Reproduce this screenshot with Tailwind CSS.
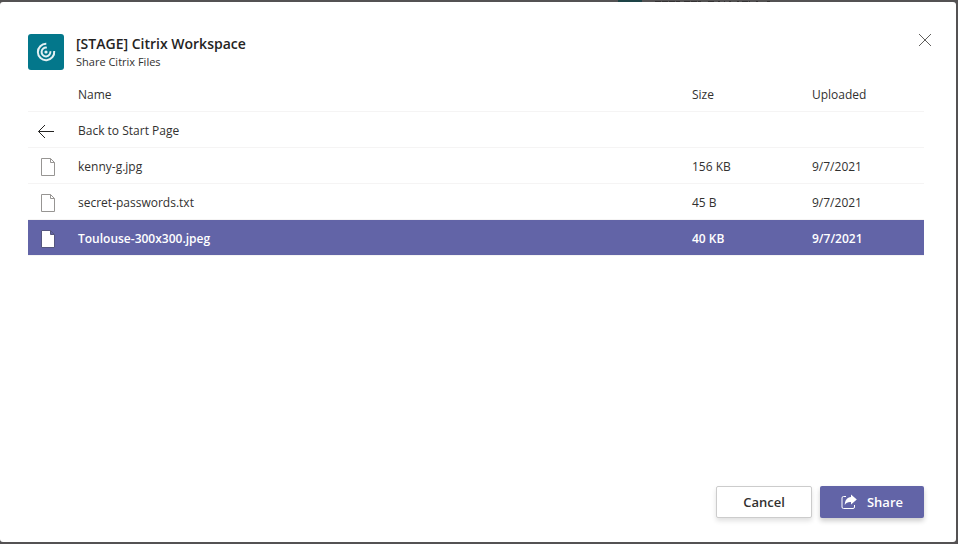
<!DOCTYPE html>
<html lang="en">
<head>
<meta charset="utf-8">
<meta name="viewport" content="width=device-width, initial-scale=1">
<title>Share Citrix Files</title>
<script src="https://cdn.jsdelivr.net/npm/@tailwindcss/browser@4"></script>
</head>
<body class="flex h-screen flex-col overflow-hidden bg-[#545253] pb-0.5 pr-0.5 font-['Segoe_UI','Open_Sans','Noto_Sans',sans-serif] text-xs text-[#323130]">
  <!-- Sliver of the dimmed page above the dialog -->
  <div class="flex h-0.5 shrink-0 justify-center overflow-hidden pl-[436px]" aria-hidden="true">
    <span class="h-0.5 w-6 bg-[#1d4346]"></span>
    <svg class="ml-3 h-0.5 w-30" viewBox="0 0 120 2" stroke="#333132"><path d="M1 1.500H26M30 1.500H47M54 1.500H60M64 1.500H66M70 1.500H71M75 1.500H77M83 1.500H85M88 1.500H96M102 1.500H104M113 1.500H116" stroke-dasharray="6 1"/></svg>
  </div>
  <main role="dialog" aria-labelledby="dialog-title" class="flex min-h-0 flex-1 flex-col rounded-[3px] bg-white pb-6 pl-7 pr-8 pt-8">
    <header class="flex items-start">
      <svg class="size-9 shrink-0" viewBox="0 0 36 36" fill="none" aria-hidden="true">
        <rect width="36" height="36" rx="3" fill="#03778b"/>
        <g stroke="#e4f1f3" stroke-width="2">
          <path d="M18.300 9.800A8.200 8.200 0 1 0 26.200 17"/>
          <path d="M18.800 13.700A4.400 4.400 0 1 0 22.300 17.200"/>
        </g>
        <circle cx="18" cy="18" r="1.600" fill="#e4f1f3"/>
      </svg>
      <div class="ml-3 flex-1">
        <h1 id="dialog-title" class="text-sm font-semibold leading-5 text-[#252423]">[STAGE] Citrix Workspace</h1>
        <p class="text-[11px] leading-4">Share Citrix Files</p>
      </div>
      <button type="button" aria-label="Close" class="-mr-[9px] -mt-1 flex h-5 w-4 items-center justify-center">
        <svg class="size-4" viewBox="0 0 16 16" fill="none" stroke="#605e5c" aria-hidden="true"><path d="M2 2l12 12M14 2L2 14"/></svg>
      </button>
    </header>
    <table class="mt-1.5 w-full table-fixed border-separate border-spacing-0 text-left text-xs">
      <colgroup><col class="w-[50px]"><col><col class="w-[120px]"><col class="w-28"></colgroup>
      <thead>
        <tr class="h-9 *:border-b *:border-[#f5f4f4] *:p-0 *:pt-0.5 *:font-normal">
          <th aria-label="Type"></th><th scope="col">Name</th><th scope="col">Size</th><th scope="col">Uploaded</th>
        </tr>
      </thead>
      <tbody>
        <tr class="h-9 *:border-b *:border-[#f5f4f4] *:p-0 *:pt-0.5">
          <td><svg class="-mt-0.5 ml-2.5 size-5" viewBox="0 0 20 20" fill="none" stroke="#252423" aria-hidden="true"><path d="M16 11.500H.5M7 5l-6.500 6.500L7 18"/></svg></td>
          <td><a href="#">Back to Start Page</a></td><td></td><td></td>
        </tr>
        <tr class="h-9 *:border-b *:border-[#f5f4f4] *:p-0 *:pt-0.5">
          <td><svg class="-mt-0.5 ml-2.5 size-5" viewBox="0 0 20 20" fill="#fff" stroke="#979593" aria-hidden="true"><path d="M3.500 2.500h9l4 4v13h-13zM12.500 2.500v4h4"/></svg></td>
          <td>kenny-g.jpg</td><td>156 KB</td><td>9/7/2021</td>
        </tr>
        <tr class="h-9 *:border-b *:border-[#f5f4f4] *:p-0 *:pt-0.5">
          <td><svg class="-mt-0.5 ml-2.5 size-5" viewBox="0 0 20 20" fill="#fff" stroke="#979593" aria-hidden="true"><path d="M3.500 2.500h9l4 4v13h-13zM12.500 2.500v4h4"/></svg></td>
          <td>secret-passwords.txt</td><td>45 B</td><td>9/7/2021</td>
        </tr>
        <tr class="h-9 bg-[#6264a7] font-semibold text-white *:border-b *:border-[#f5f4f4] *:p-0 *:pt-0.5" aria-selected="true">
          <td><svg class="-mt-0.5 ml-2.5 size-5" viewBox="0 0 20 20" fill="#fff" stroke="#55567f" aria-hidden="true"><path d="M3.500 2.500h9l4 4v13h-13zM12.500 2.500v4h4"/></svg></td>
          <td>Toulouse-300x300.jpeg</td><td>40 KB</td><td>9/7/2021</td>
        </tr>
      </tbody>
    </table>
    <footer class="mt-auto flex justify-end gap-2 text-[13px] font-semibold">
      <button type="button" class="h-8 w-24 rounded-xs border border-[#cccccc] bg-white pt-0.5 shadow-[0_3px_5px_rgba(0,0,0,0.12)]">Cancel</button>
      <button type="button" class="flex h-8 w-26 items-center justify-center gap-2.5 rounded-xs bg-[#6264a7] pt-0.5 text-white shadow-[0_3px_5px_rgba(0,0,0,0.2)]">
        <svg class="-mt-0.5 size-4" viewBox="0 0 16 16" fill="none" stroke="#fff" aria-hidden="true">
          <path d="M5 2.500H2.500a1.500 1.500 0 0 0-1.500 1.500v9a1.500 1.500 0 0 0 1.500 1.500h9.500a1.500 1.500 0 0 0 1.500-1.500v-2"/>
          <path d="M10 .5l5.800 5L10 10.500V8C7 7.800 5.300 8.500 3.800 11 3.800 6.500 6 3.300 10 3z" fill="#fff" stroke="none"/>
        </svg>
        Share
      </button>
    </footer>
  </main>
</body>
</html>
